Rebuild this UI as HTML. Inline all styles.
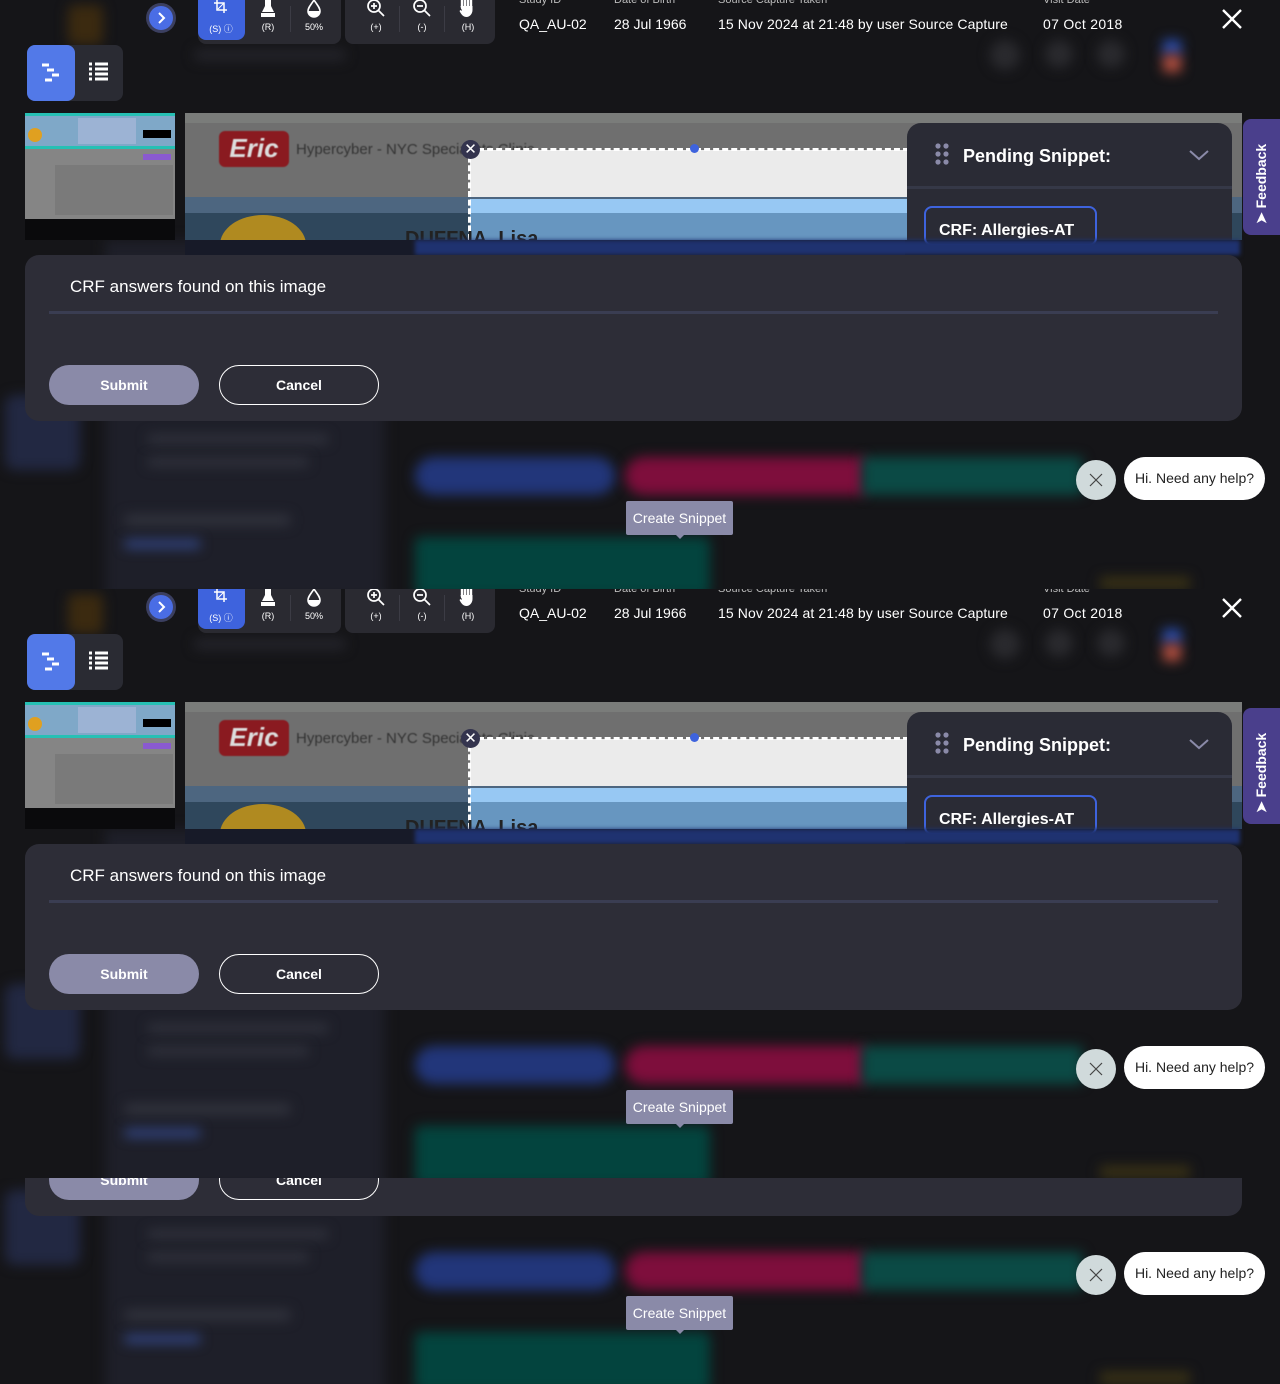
<!DOCTYPE html>
<html><head><meta charset="utf-8"><style>
*{margin:0;padding:0;box-sizing:border-box}
body{width:1280px;height:1384px;background:#151518;overflow:hidden;position:relative;font-family:"Liberation Sans",sans-serif}
.clip{position:absolute;left:0;width:1280px;overflow:hidden}
.blk{position:absolute;left:0;width:1280px;height:589px;background:#151518}
.a{position:absolute}
.bl{filter:blur(6px)}
.tb{background:#2a2a31;border-radius:0 0 8px 8px}
.ic{position:absolute;color:#fff;font-size:9px;text-align:center;width:46px}
.lab{position:absolute;color:#bbb;font-size:11px}
.val{position:absolute;color:#fff;font-size:14px}
</style></head><body>

<div class="clip" style="top:0;height:589px"><div class="blk" style="top:0" id="b1">
<div class="a bl" style="left:105px;top:240px;width:280px;height:360px;background:#1e1f29"></div>
<div class="a bl" style="left:5px;top:395px;width:75px;height:75px;background:#222842;border-radius:10px"></div>
<div class="a bl" style="left:148px;top:435px;width:180px;height:8px;background:#33353f"></div>
<div class="a bl" style="left:148px;top:458px;width:160px;height:8px;background:#33353f"></div>
<div class="a bl" style="left:125px;top:515px;width:165px;height:10px;background:#33353f"></div>
<div class="a bl" style="left:125px;top:540px;width:75px;height:8px;background:#34498a"></div>
<div class="a bl" style="left:415px;top:457px;width:200px;height:38px;background:#22367a;border-radius:19px"></div>
<div class="a bl" style="left:625px;top:457px;width:240px;height:38px;background:#7e0e3c;border-radius:19px 0 0 19px"></div>
<div class="a bl" style="left:862px;top:457px;width:220px;height:38px;background:#0b4a45"></div>
<div class="a bl" style="left:415px;top:537px;width:295px;height:60px;background:#03443e;border-radius:6px"></div>
<div class="a bl" style="left:990px;top:40px;width:30px;height:30px;background:#2a2a2e;border-radius:50%"></div>
<div class="a bl" style="left:1045px;top:40px;width:28px;height:28px;background:#2a2a2e;border-radius:50%"></div>
<div class="a bl" style="left:1097px;top:40px;width:28px;height:28px;background:#2a2a2e;border-radius:50%"></div>
<div class="a bl" style="left:1163px;top:40px;width:18px;height:15px;background:#2c4fb0"></div>
<div class="a bl" style="left:1163px;top:55px;width:18px;height:17px;background:#b65040"></div>
<div class="a bl" style="left:68px;top:5px;width:35px;height:40px;background:#3b2a10;border-radius:6px"></div>
<div class="a bl" style="left:195px;top:50px;width:150px;height:10px;background:#26262d"></div>
<div class="a bl" style="left:1100px;top:577px;width:90px;height:12px;background:#3a3215"></div>

<div class="a" style="left:146px;top:3px;width:30px;height:30px;border-radius:50%;background:#3b3f60"></div>
<div class="a" style="left:149px;top:6px;width:24px;height:24px;border-radius:50%;background:#4a6de5"></div>
<svg class="a" style="left:149px;top:6px" width="24" height="24"><path d="M10 7l5 5-5 5" stroke="#fff" stroke-width="2" fill="none"/></svg>
<div class="a tb" style="left:198px;top:0;width:143px;height:44px"></div>
<div class="a" style="left:198px;top:0;width:47px;height:40px;background:#3e63dd;border-radius:0 0 8px 8px"></div>
<svg class="a" style="left:213px;top:0" width="18" height="14"><path d="M4 0v10h10M1 3h10v10" stroke="#fff" stroke-width="1.5" fill="none"/><path d="M5 9l6-6" stroke="#fff"/></svg>
<div class="ic" style="left:198px;top:22px">(S) ⓘ</div>
<svg class="a" style="left:260px;top:0" width="16" height="18"><path d="M5 0h6v6l3 6H2l3-6z M1 13h14v4H1z" fill="#fff"/></svg>
<div class="ic" style="left:245px;top:22px">(R)</div>
<div class="a" style="left:290px;top:6px;width:1px;height:26px;background:#3c3c45"></div>
<svg class="a" style="left:305px;top:0" width="18" height="18"><path d="M9 0C5 6 3 8 3 11a6 6 0 0012 0c0-3-2-5-6-11z" fill="none" stroke="#fff" stroke-width="1.6"/><path d="M3.5 11h11a5.5 5.5 0 01-11 0z" fill="#fff"/></svg>
<div class="ic" style="left:291px;top:22px">50%</div>
<div class="a tb" style="left:345px;top:0;width:150px;height:44px"></div>
<svg class="a" style="left:366px;top:0" width="20" height="20"><circle cx="8" cy="6" r="6" stroke="#fff" stroke-width="1.7" fill="none"/><path d="M12 10l6 6M5 6h6M8 3v6" stroke="#fff" stroke-width="1.7"/></svg>
<div class="ic" style="left:353px;top:22px">(+)</div>
<div class="a" style="left:399px;top:6px;width:1px;height:26px;background:#3c3c45"></div>
<svg class="a" style="left:412px;top:0" width="20" height="20"><circle cx="8" cy="6" r="6" stroke="#fff" stroke-width="1.7" fill="none"/><path d="M12 10l6 6M5 6h6" stroke="#fff" stroke-width="1.7"/></svg>
<div class="ic" style="left:399px;top:22px">(-)</div>
<div class="a" style="left:444px;top:6px;width:1px;height:26px;background:#3c3c45"></div>
<svg class="a" style="left:458px;top:0" width="20" height="18"><path d="M4 0v8M7 0v7M10 0v7M13 0v8" stroke="#fff" stroke-width="2.4" stroke-linecap="round"/><path d="M2.5 6h12v4c0 4-3 7-6 7s-5-2-7-6l1-1 1.5 1z" fill="#fff"/></svg>
<div class="ic" style="left:445px;top:22px">(H)</div>

<div class="lab" style="left:519px;top:-6px">Study ID</div><div class="val" style="left:519px;top:16px">QA_AU-02</div>
<div class="lab" style="left:614px;top:-6px">Date of Birth</div><div class="val" style="left:614px;top:16px">28 Jul 1966</div>
<div class="lab" style="left:718px;top:-6px">Source Capture Taken</div><div class="val" style="left:718px;top:16px;letter-spacing:.1px">15 Nov 2024 at 21:48 by user Source Capture</div>
<div class="lab" style="left:1043px;top:-6px">Visit Date</div><div class="val" style="left:1043px;top:16px;letter-spacing:.3px">07 Oct 2018</div>
<svg class="a" style="left:1220px;top:7px" width="24" height="24"><path d="M3 3l18 18M21 3L3 21" stroke="#fff" stroke-width="2.4"/></svg>

<div class="a" style="left:27px;top:45px;width:96px;height:56px;background:#2a2b33;border-radius:8px"></div>
<div class="a" style="left:27px;top:45px;width:48px;height:56px;background:#5279e8;border-radius:8px"></div>
<svg class="a" style="left:38px;top:60px" width="26" height="24"><path d="M4 5h7M9 10h7M14 15h7M7 20h7" stroke="#fff" stroke-width="3"/></svg>
<svg class="a" style="left:88px;top:62px" width="22" height="20"><path d="M1 2h3M7 2h13M1 7h3M7 7h13M1 12h3M7 12h13M1 17h3M7 17h13" stroke="#fff" stroke-width="3"/></svg>

<div class="a" style="left:25px;top:113px;width:150px;height:127px;background:#0a0a0c"></div>
<div class="a" style="left:25px;top:113px;width:150px;height:106px;background:#858585"></div>
<div class="a" style="left:25px;top:113px;width:150px;height:36px;background:#7fa8c8;border-top:3px solid #26c0b4;border-bottom:3px solid #26c0b4"></div>
<div class="a" style="left:28px;top:128px;width:14px;height:14px;border-radius:50%;background:#e0a020"></div>
<div class="a" style="left:78px;top:118px;width:58px;height:26px;background:#a8b8d8;opacity:.7"></div>
<div class="a" style="left:143px;top:130px;width:28px;height:8px;background:#000"></div>
<div class="a" style="left:143px;top:154px;width:28px;height:6px;background:#8a5ad0"></div>
<div class="a" style="left:55px;top:165px;width:118px;height:50px;background:#7a7a7a"></div>

<div class="a" style="left:185px;top:113px;width:1057px;height:127px;background:#6f6f6f"></div>
<div class="a" style="left:185px;top:113px;width:1057px;height:10px;background:#7a7c7a"></div>
<div class="a" style="left:185px;top:197px;width:1057px;height:16px;background:#4d6680"></div>
<div class="a" style="left:185px;top:213px;width:1057px;height:27px;background:#2f475c"></div>
<div class="a" style="left:220px;top:215px;width:86px;height:60px;border-radius:50%;background:#b08a20"></div>
<div class="a" style="left:219px;top:131px;width:70px;height:36px;background:#8a1a20;border-radius:6px;color:#ddd;font:italic bold 26px 'Liberation Sans',sans-serif;text-align:center;line-height:34px;filter:blur(.6px)">Eric</div>
<div class="a" style="left:296px;top:141px;color:#333;font-size:15px;filter:blur(.5px)">Hypercyber - NYC Specialists Clinic</div>
<div class="a" style="left:470px;top:150px;width:437px;height:47px;background:#ebebeb"></div>
<div class="a" style="left:470px;top:199px;width:437px;height:14px;background:#97c8f3"></div>
<div class="a" style="left:470px;top:213px;width:437px;height:27px;background:#6796c0"></div>
<div class="a" style="left:469px;top:148px;width:440px;height:0;border-top:3px dashed #fff"></div>
<div class="a" style="left:468px;top:148px;width:0;height:92px;border-left:3px dashed #fff"></div>
<div class="a" style="left:405px;top:228px;color:#222;font:bold 20px 'Liberation Sans',sans-serif">DUFFNA, Lisa</div>
<div class="a" style="left:461px;top:140px;width:19px;height:19px;border-radius:50%;background:#34344e;color:#fff;font-size:15px;text-align:center;line-height:19px">✕</div>
<div class="a" style="left:690px;top:144px;width:9px;height:9px;border-radius:50%;background:#3e63dd"></div>

<div class="a" style="left:907px;top:123px;width:325px;height:117px;background:#2a2b35;border-radius:14px 14px 0 0"></div>
<div class="a" style="left:907px;top:186px;width:325px;height:3px;background:#353847"></div>
<svg class="a" style="left:933px;top:142px" width="20" height="26"><g fill="#8a8aa8"><circle cx="5" cy="4" r="2.6"/><circle cx="13" cy="4" r="2.6"/><circle cx="5" cy="12" r="2.6"/><circle cx="13" cy="12" r="2.6"/><circle cx="5" cy="20" r="2.6"/><circle cx="13" cy="20" r="2.6"/></g></svg>
<div class="a" style="left:963px;top:146px;color:#fff;font:bold 18px 'Liberation Sans',sans-serif">Pending Snippet:</div>
<svg class="a" style="left:1188px;top:148px" width="22" height="14"><path d="M2 3l9 8 9-8" stroke="#8a8aa8" stroke-width="2" fill="none"/></svg>
<div class="a" style="left:924px;top:206px;width:173px;height:40px;border:2px solid #3e63dd;border-radius:8px;color:#fff;font:bold 16px 'Liberation Sans',sans-serif;padding:14px 0 0 13px">CRF: Allergies-AT</div>
<div class="a" style="left:185px;top:240px;width:720px;height:15px;background:#171a28"></div>
<div class="a" style="left:415px;top:240px;width:825px;height:15px;background:#1f3270;filter:blur(2px)"></div>

<div class="a" style="left:1243px;top:119px;width:40px;height:116px;background:#4a3f8c;border-radius:8px 0 0 8px"></div>
<div class="a" style="left:1253px;top:224px;transform:rotate(-90deg);transform-origin:0 0;color:#fff;font:bold 14px 'Liberation Sans',sans-serif;white-space:nowrap;width:110px">➤ Feedback</div>

<div class="a" style="left:25px;top:255px;width:1217px;height:166px;background:#2d2d37;border-radius:14px"></div>
<div class="a" style="left:70px;top:277px;color:#fff;font-size:17px">CRF answers found on this image</div>
<div class="a" style="left:49px;top:311px;width:1169px;height:3px;background:#3a3d52"></div>
<div class="a" style="left:49px;top:365px;width:150px;height:40px;background:#8a8aa8;border-radius:20px;color:#fff;font:bold 14px 'Liberation Sans',sans-serif;text-align:center;line-height:40px">Submit</div>
<div class="a" style="left:219px;top:365px;width:160px;height:40px;border:1px solid #fff;border-radius:20px;color:#fff;font:bold 14px 'Liberation Sans',sans-serif;text-align:center;line-height:38px">Cancel</div>

<div class="a" style="left:626px;top:501px;width:107px;height:34px;background:#8a8aa8;border-radius:2px;color:#fff;font-size:14px;text-align:center;line-height:34px">Create Snippet</div>
<div class="a" style="left:675px;top:534px;width:0;height:0;border:5px solid transparent;border-top-color:#8a8aa8"></div>

<div class="a" style="left:1076px;top:460px;width:40px;height:40px;border-radius:50%;background:#d0dadb"></div>
<svg class="a" style="left:1089px;top:473px" width="14" height="14"><path d="M1 1l12 12M13 1L1 13" stroke="#444" stroke-width="1.2"/></svg>
<div class="a" style="left:1124px;top:457px;width:141px;height:43px;background:#fff;border-radius:22px;color:#222;font-size:14px;text-align:center;line-height:43px">Hi. Need any help?</div>
</div></div>

<div class="clip" style="top:589px;height:589px" id="c2"></div>
<div class="clip" style="top:1178px;height:206px" id="c3"></div>
<script>
var b=document.getElementById('b1');
var x=b.cloneNode(true);x.removeAttribute('id');document.getElementById('c2').appendChild(x);
var y=b.cloneNode(true);y.removeAttribute('id');y.style.top='-383px';document.getElementById('c3').appendChild(y);
</script>
</body></html>
